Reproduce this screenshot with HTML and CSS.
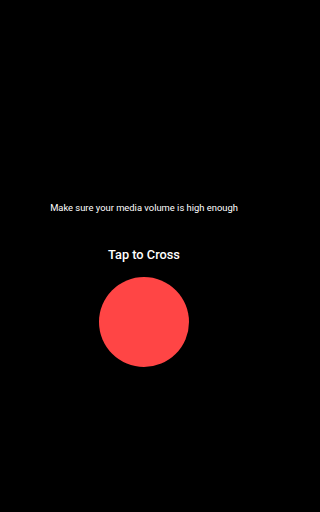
FILE: index.html
```html
<!DOCTYPE html>
<html>
<head>
<meta charset="utf-8">
<link rel="stylesheet" href="styles.css">
</head>
<body>
<main class="screen">
  <p class="hint">Make sure your media volume is high enough</p>
  <h1 class="title">Tap to Cross</h1>
  <button class="tap" aria-label="Tap to Cross"></button>
</main>
</body>
</html>
```
FILE: styles.css
```css
html, body {
  margin: 0;
  padding: 0;
  background: #000;
}
.screen {
  width: 288px;
  height: 512px;
  display: flex;
  flex-direction: column;
  align-items: center;
  padding-top: 201px;
  box-sizing: border-box;
  font-family: Roboto, "Noto Sans", sans-serif;
  color: #fff;
}
.hint {
  margin: 0;
  font-size: 9.4px;
  line-height: 13px;
}
.title {
  margin: 33px 0 0;
  font-size: 12.8px;
  font-weight: 500;
  line-height: 16px;
}
.tap {
  margin-top: 14px;
  width: 90px;
  height: 90px;
  border: none;
  padding: 0;
  border-radius: 50%;
  background: #ff4545;
}
```
